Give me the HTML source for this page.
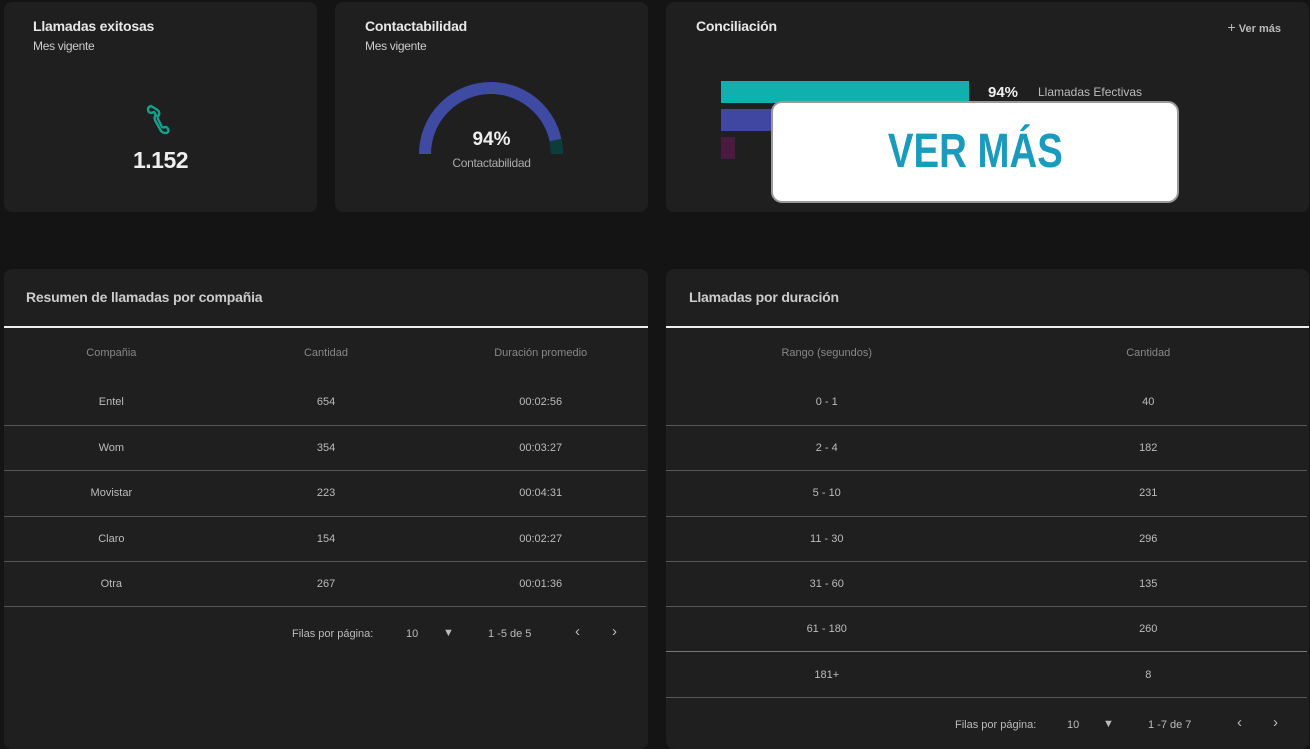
<!DOCTYPE html>
<html><head><meta charset="utf-8"><style>
*{margin:0;padding:0;box-sizing:border-box}
body{width:1310px;height:739px;background:#141414;font-family:"Liberation Sans",sans-serif;color:#ddd;position:relative;overflow:hidden}
.card{position:absolute;background:#1f1f1f;border-radius:8px}
.t{position:absolute;font-weight:bold;font-size:14px;color:#e8e8e8;letter-spacing:-0.2px}
.s{position:absolute;font-size:12px;color:#ccc;letter-spacing:-0.3px}
.row{position:absolute;left:0;right:0;display:flex;font-size:11px;color:#bbb}
.row div{flex:1;text-align:center}
.sep{position:absolute;height:1px;background:#555}
.pg{position:absolute;font-size:11px;color:#bbb}
</style></head><body>
<div class="card" style="left:4px;top:2px;width:313px;height:210px">
<div class="t" style="left:29px;top:16px">Llamadas exitosas</div>
<div class="s" style="left:29px;top:37px">Mes vigente</div>
<svg style="position:absolute;left:141px;top:101px" width="26" height="34" viewBox="0 0 26 34"><path d="M6 3c-4 1-4 6 0 7l3-1 2 3c-2 2-2 4 0 7l5 9c2 2 5 3 7 1 1-2 0-4-2-5-2 0-3 1-4 0l-4-8c-1-2 0-3 1-4 1-3-1-5-3-6z" fill="none" stroke="#14a08e" stroke-width="2.4"/></svg>
<div style="position:absolute;left:0;width:313px;top:145px;text-align:center;font-weight:bold;font-size:23px;color:#eee;letter-spacing:-0.5px">1.152</div>
</div>
<div class="card" style="left:335px;top:2px;width:313px;height:210px">
<div class="t" style="left:30px;top:16px">Contactabilidad</div>
<div class="s" style="left:30px;top:37px">Mes vigente</div>
<svg style="position:absolute;left:84px;top:76px" width="144" height="76" viewBox="0 0 144 76"><path d="M6 76A66 66 0 0 1 138 76" fill="none" stroke="#3f4aa3" stroke-width="12"/><path d="M136.5 62A66 66 0 0 1 138 76" fill="none" stroke="#0d3d3a" stroke-width="12"/></svg>
<div style="position:absolute;left:0;width:313px;top:127px;text-align:center;font-weight:bold;font-size:19px;color:#eee">94%</div>
<div style="position:absolute;left:0;width:313px;top:154px;text-align:center;font-size:12px;color:#aaa;letter-spacing:-0.3px">Contactabilidad</div>
</div>
<div class="card" style="left:666px;top:2px;width:643px;height:210px">
<div class="t" style="left:30px;top:16px">Conciliación</div>
<div style="position:absolute;right:28px;top:17px;font-size:11px;color:#bbb;font-weight:bold"><span style="font-weight:normal;font-size:14px">+</span> Ver más</div>
<div style="position:absolute;left:55px;top:79px;width:248px;height:22px;background:#0fb0ad"></div>
<div style="position:absolute;left:55px;top:107px;width:120px;height:22px;background:#4047a0"></div>
<div style="position:absolute;left:55px;top:135px;width:14px;height:22px;background:#4a1a40"></div>
<div style="position:absolute;left:322px;top:82px;font-weight:bold;font-size:15px;color:#eee">94%</div>
<div style="position:absolute;left:372px;top:83px;font-size:12px;color:#bbb">Llamadas Efectivas</div>
</div>
<div style="position:absolute;left:771px;top:101px;width:408px;height:102px;background:#fff;border:2px solid #999;border-radius:11px;text-align:center;line-height:98px;color:#1a9bbd;font-weight:bold;font-size:48px"><span style="display:inline-block;transform:scaleX(.8)">VER MÁS</span></div>

<div class="card" style="left:4px;top:269px;width:644px;height:480px">
<div class="t" style="left:22px;top:20px;color:#ccc">Resumen de llamadas por compañia</div>
<div style="position:absolute;left:0;right:0;top:57px;height:2px;background:#eee"></div>
<div class="row" style="top:78px;color:#888;font-size:11px"><div>Compañia</div><div>Cantidad</div><div>Duración promedio</div></div>
<div class="row" style="top:127px"><div>Entel</div><div>654</div><div>00:02:56</div></div>
<div class="sep" style="left:0;right:2px;top:156px"></div>
<div class="row" style="top:173px"><div>Wom</div><div>354</div><div>00:03:27</div></div>
<div class="sep" style="left:0;right:2px;top:201px"></div>
<div class="row" style="top:218px"><div>Movistar</div><div>223</div><div>00:04:31</div></div>
<div class="sep" style="left:0;right:2px;top:247px"></div>
<div class="row" style="top:264px"><div>Claro</div><div>154</div><div>00:02:27</div></div>
<div class="sep" style="left:0;right:2px;top:292px"></div>
<div class="row" style="top:309px"><div>Otra</div><div>267</div><div>00:01:36</div></div>
<div class="sep" style="left:0;right:2px;top:337px"></div>
<div class="pg" style="left:288px;top:359px">Filas por página:</div>
<div class="pg" style="left:402px;top:359px">10</div>
<div class="pg" style="left:439px;top:358px">▼</div>
<div class="pg" style="left:484px;top:359px">1 -5 de 5</div>
<div class="pg" style="left:571px;top:354px;font-size:15px">‹</div>
<div class="pg" style="left:608px;top:354px;font-size:15px">›</div>
</div>
<div class="card" style="left:666px;top:269px;width:643px;height:480px">
<div class="t" style="left:23px;top:20px;color:#ccc">Llamadas por duración</div>
<div style="position:absolute;left:0;right:0;top:57px;height:2px;background:#eee"></div>
<div class="row" style="top:78px;color:#888;font-size:11px"><div>Rango (segundos)</div><div>Cantidad</div></div>
<div class="row" style="top:127px"><div>0 - 1</div><div>40</div></div>
<div class="sep" style="left:0;right:2px;top:156px"></div>
<div class="row" style="top:173px"><div>2 - 4</div><div>182</div></div>
<div class="sep" style="left:0;right:2px;top:201px"></div>
<div class="row" style="top:218px"><div>5 - 10</div><div>231</div></div>
<div class="sep" style="left:0;right:2px;top:247px"></div>
<div class="row" style="top:264px"><div>11 - 30</div><div>296</div></div>
<div class="sep" style="left:0;right:2px;top:292px"></div>
<div class="row" style="top:309px"><div>31 - 60</div><div>135</div></div>
<div class="sep" style="left:0;right:2px;top:337px"></div>
<div class="row" style="top:354px"><div>61 - 180</div><div>260</div></div>
<div class="sep" style="left:0;right:2px;top:382px;background:#777"></div>
<div class="row" style="top:400px"><div>181+</div><div>8</div></div>
<div class="sep" style="left:0;right:2px;top:428px"></div>
<div class="pg" style="left:289px;top:450px">Filas por página:</div>
<div class="pg" style="left:401px;top:450px">10</div>
<div class="pg" style="left:437px;top:449px">▼</div>
<div class="pg" style="left:482px;top:450px">1 -7 de 7</div>
<div class="pg" style="left:571px;top:445px;font-size:15px">‹</div>
<div class="pg" style="left:607px;top:445px;font-size:15px">›</div>
</div>
</body></html>
